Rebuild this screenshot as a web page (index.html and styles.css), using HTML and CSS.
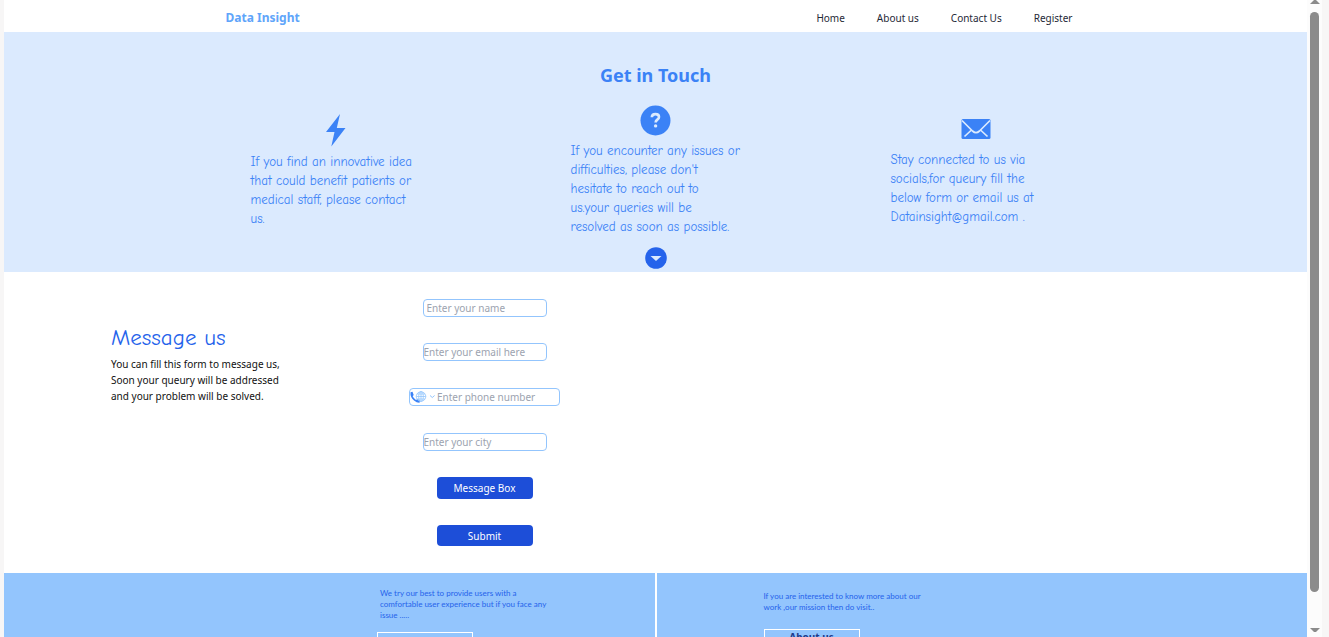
FILE: index.html
```html
<!DOCTYPE html>
<html lang="en">
<head>
<meta charset="utf-8">
<title>Data Insight</title>
<link rel="stylesheet" href="styles.css">
</head>
<body>
<div class="shell">
  <div class="page">
    <header class="nav">
      <a class="brand" href="#">Data Insight</a>
      <nav class="links">
        <a href="#">Home</a>
        <a href="#about">About us</a>
        <a href="#contact">Contact Us</a>
        <a href="#register">Register</a>
      </nav>
    </header>
    <main>
      <section class="hero">
        <h1>Get in Touch</h1>
        <div class="cards">
          <div class="card">
            <svg width="20" height="34" viewBox="0 0 20 34" aria-hidden="true"><path fill="#3b82f6" d="M14 1 0 19h8.500L5.300 33.500 19.500 15h-8.700z"/></svg>
            <p>If you find an innovative idea<br>that could benefit patients or<br>medical staff, please contact<br>us.</p>
          </div>
          <div class="card">
            <svg width="31" height="31" viewBox="0 0 31 31" aria-hidden="true"><circle cx="15.500" cy="15.500" r="15" fill="#3b82f6"/><path d="M11.800 12.200c.1-2.200 1.500-3.100 3.700-3.100 2.300 0 3.500 1.200 3.500 2.900 0 2.700-3.400 2.600-3.400 5.400" fill="none" stroke="#dbeafe" stroke-width="2.600"/><circle cx="15.600" cy="20.900" r="1.700" fill="#dbeafe"/></svg>
            <p>If you encounter any issues or<br>difficulties, please don't<br>hesitate to reach out to<br>us.your queries will be<br>resolved as soon as possible.</p>
          </div>
          <div class="card">
            <svg class="mail" width="30" height="22" viewBox="0 0 30 22" aria-hidden="true"><rect x=".5" y="1" width="29" height="20" rx="1.500" fill="#3b82f6"/><path d="M1 2.500 11.500 13q3.500 3.200 7 0L29 2.500M10.500 12 3.500 18.500M19.500 12l7 6.500" fill="none" stroke="#dbeafe" stroke-width="1.700"/></svg>
            <p>Stay connected to us via<br>socials,for queury fill the<br>below form or email us at<br>Datainsight@gmail.com .</p>
          </div>
        </div>
        <a class="down" href="#contact" aria-label="Go to form"><svg width="22" height="22" viewBox="0 0 22 22"><circle cx="11" cy="11" r="10.800" fill="#2563eb"/><path d="M5.500 9h11L11 14z" fill="#dbeafe"/></svg></a>
      </section>
      <section class="contact" id="contact">
        <div class="intro">
          <h2>Message us</h2>
          <p>You can fill this form to message us,<br>Soon your queury will be addressed<br>and your problem will be solved.</p>
        </div>
        <form class="form">
          <input class="field name" type="text" placeholder="Enter your name" aria-label="Name">
          <input class="field" type="email" placeholder="Enter your email here" aria-label="Email">
          <div class="phone-row">
            <div class="phone">
              <svg width="26" height="14" viewBox="0 0 26 14" aria-hidden="true"><path d="M.5 2.200 2.500 1.800 3.700 5 2.700 6.200Q4 8.800 6 10L7.500 8.900 10 10.500 9.500 12.800Q7 13 4 10.500 0 7 .5 2.200z" fill="#3b82f6"/><g fill="none" stroke="#93c5fd" stroke-width=".8"><circle cx="11" cy="6.500" r="4.800"/><ellipse cx="11" cy="6.500" rx="2.300" ry="4.800"/><path d="M6.200 6.500h9.600M7 4h8M7 9h8M11 1.700v9.600"/></g><path d="m20 5.500 2.300 2 2.300-2" fill="none" stroke="#93c5fd"/></svg>
              <input type="tel" placeholder="Enter phone number" aria-label="Phone number">
            </div>
          </div>
          <input class="field" type="text" placeholder="Enter your city" aria-label="City">
          <button class="btn tall" type="button">Message Box</button>
          <button class="btn" type="submit">Submit</button>
        </form>
      </section>
    </main>
    <footer class="footer">
      <div class="panel help">
        <p>We try our best to provide users with a<br>comfortable user experience but if you face any<br>issue .....</p>
        <button type="button" aria-label="Contact us"></button>
      </div>
      <div class="panel about" id="about">
        <p>If you are interested to know more about our<br>work ,our mission then do visit..</p>
        <button type="button">About us</button>
      </div>
    </footer>
  </div>
  <div class="scrollbar" aria-hidden="true">
    <svg width="10" height="5" viewBox="0 0 10 5"><path d="M0 4 4 0h2l4 4z" fill="#8b8b8b"/></svg>
    <div class="thumb"></div>
    <svg class="arrow-down" width="10" height="6" viewBox="0 0 10 6"><path d="M0 1h10L6 5H4z" fill="#8b8b8b"/></svg>
  </div>
</div>
</body>
</html>
```

FILE: styles.css
```css
* { box-sizing: border-box; }
body {
  margin: 0;
  font-family: "Segoe UI", "Noto Sans", sans-serif;
  font-size: 10px;
  line-height: 16px;
  background: #f7f6f6;
}
h1, h2, p { margin: 0; }
a { color: inherit; text-decoration: none; }
svg { display: block; flex: none; }
input, button { font: inherit; margin: 0; }

.shell {
  display: flex;
  height: 100vh;
  overflow: hidden;
  padding: 0 7px 0 4px;
}
.page { flex: 1; min-width: 0; background: #fff; }

.nav {
  display: flex;
  justify-content: space-between;
  align-items: center;
  height: 32px;
  padding: 4px 18% 0 17%;
  color: #1f2937;
}
.brand { font-size: 12px; font-weight: 700; color: #60a5fa; }
.links { display: flex; gap: 32px; }

.hero {
  display: flex;
  flex-direction: column;
  align-items: center;
  height: 240px;
  padding-top: 29px;
  background: #dbeafe;
  color: #3b82f6;
}
.hero h1 { font-size: 18px; line-height: 28px; }
.cards {
  display: grid;
  grid-template-columns: repeat(3, 170px);
  gap: 150px;
  align-items: center;
  height: 132px;
  margin-top: 15px;
}
.card { display: flex; flex-direction: column; align-items: center; gap: 5px; }
.card p {
  width: 100%;
  font-family: "Comic Sans MS", "Comic Neue", "Noto Sans", sans-serif;
  font-size: 13px;
  line-height: 19px;
  white-space: nowrap;
}
.card .mail { margin: 4px 0 5px; }
.down { margin-top: 11px; }

.contact { display: flex; height: 301px; padding: 27px 0 0 107px; }
.intro { width: 298px; padding-top: 23px; color: #111; }
.intro h2 {
  margin-bottom: 2px;
  font-family: "Comic Sans MS", "Comic Neue", "Noto Sans", sans-serif;
  font-size: 23px;
  line-height: 32px;
  font-weight: 400;
  color: #2563eb;
}
.form { display: flex; flex-direction: column; align-items: center; gap: 26px; width: 151px; }
.field, .phone {
  height: 18px;
  padding: 0;
  border: 1px solid #93c5fd;
  border-radius: 4px;
  background: #fff;
}
.field { width: 124px; }
.name { padding-left: 3px; }
.phone-row { width: 100%; padding: 1px 0; }
.phone { display: flex; align-items: center; gap: 1px; }
.phone input { flex: 1; min-width: 0; height: 16px; padding: 0; border: 0; background: none; }
input::placeholder { color: #9ca3af; opacity: 1; }
.btn {
  width: 96px;
  height: 21px;
  padding: 0;
  border: 0;
  border-radius: 4px;
  background: #1d4ed8;
  color: #fff;
}
.tall { height: 22px; }

.footer {
  display: grid;
  grid-template-columns: 1fr 1fr;
  gap: 2px;
  font-family: "Segoe UI", Lato, sans-serif;
  font-size: 8px;
  line-height: 11px;
  color: #2563eb;
}
.panel { min-height: 120px; background: #93c5fd; }
.panel p { white-space: nowrap; }
.panel button {
  display: block;
  width: 96px;
  height: 17px;
  padding: 0;
  border: 1px solid #fff;
  background: none;
  font-family: "Segoe UI", "Noto Sans", sans-serif;
  font-size: 10px;
  font-weight: 700;
  line-height: 15px;
  color: #1e3a8a;
}
.help { padding: 15px 0 0 373px; }
.help p { padding-left: 3px; margin-bottom: 11px; }
.about { padding: 18px 0 0 107px; }
.about p { margin-bottom: 16px; }

.scrollbar {
  display: flex;
  flex-direction: column;
  align-items: center;
  width: 15px;
  background: #fcfcfc;
}
.thumb { width: 9px; height: 91%; margin-top: 7px; border-radius: 5px; background: #8b8b8b; }
.arrow-down { margin: auto 0 4px; }
```
